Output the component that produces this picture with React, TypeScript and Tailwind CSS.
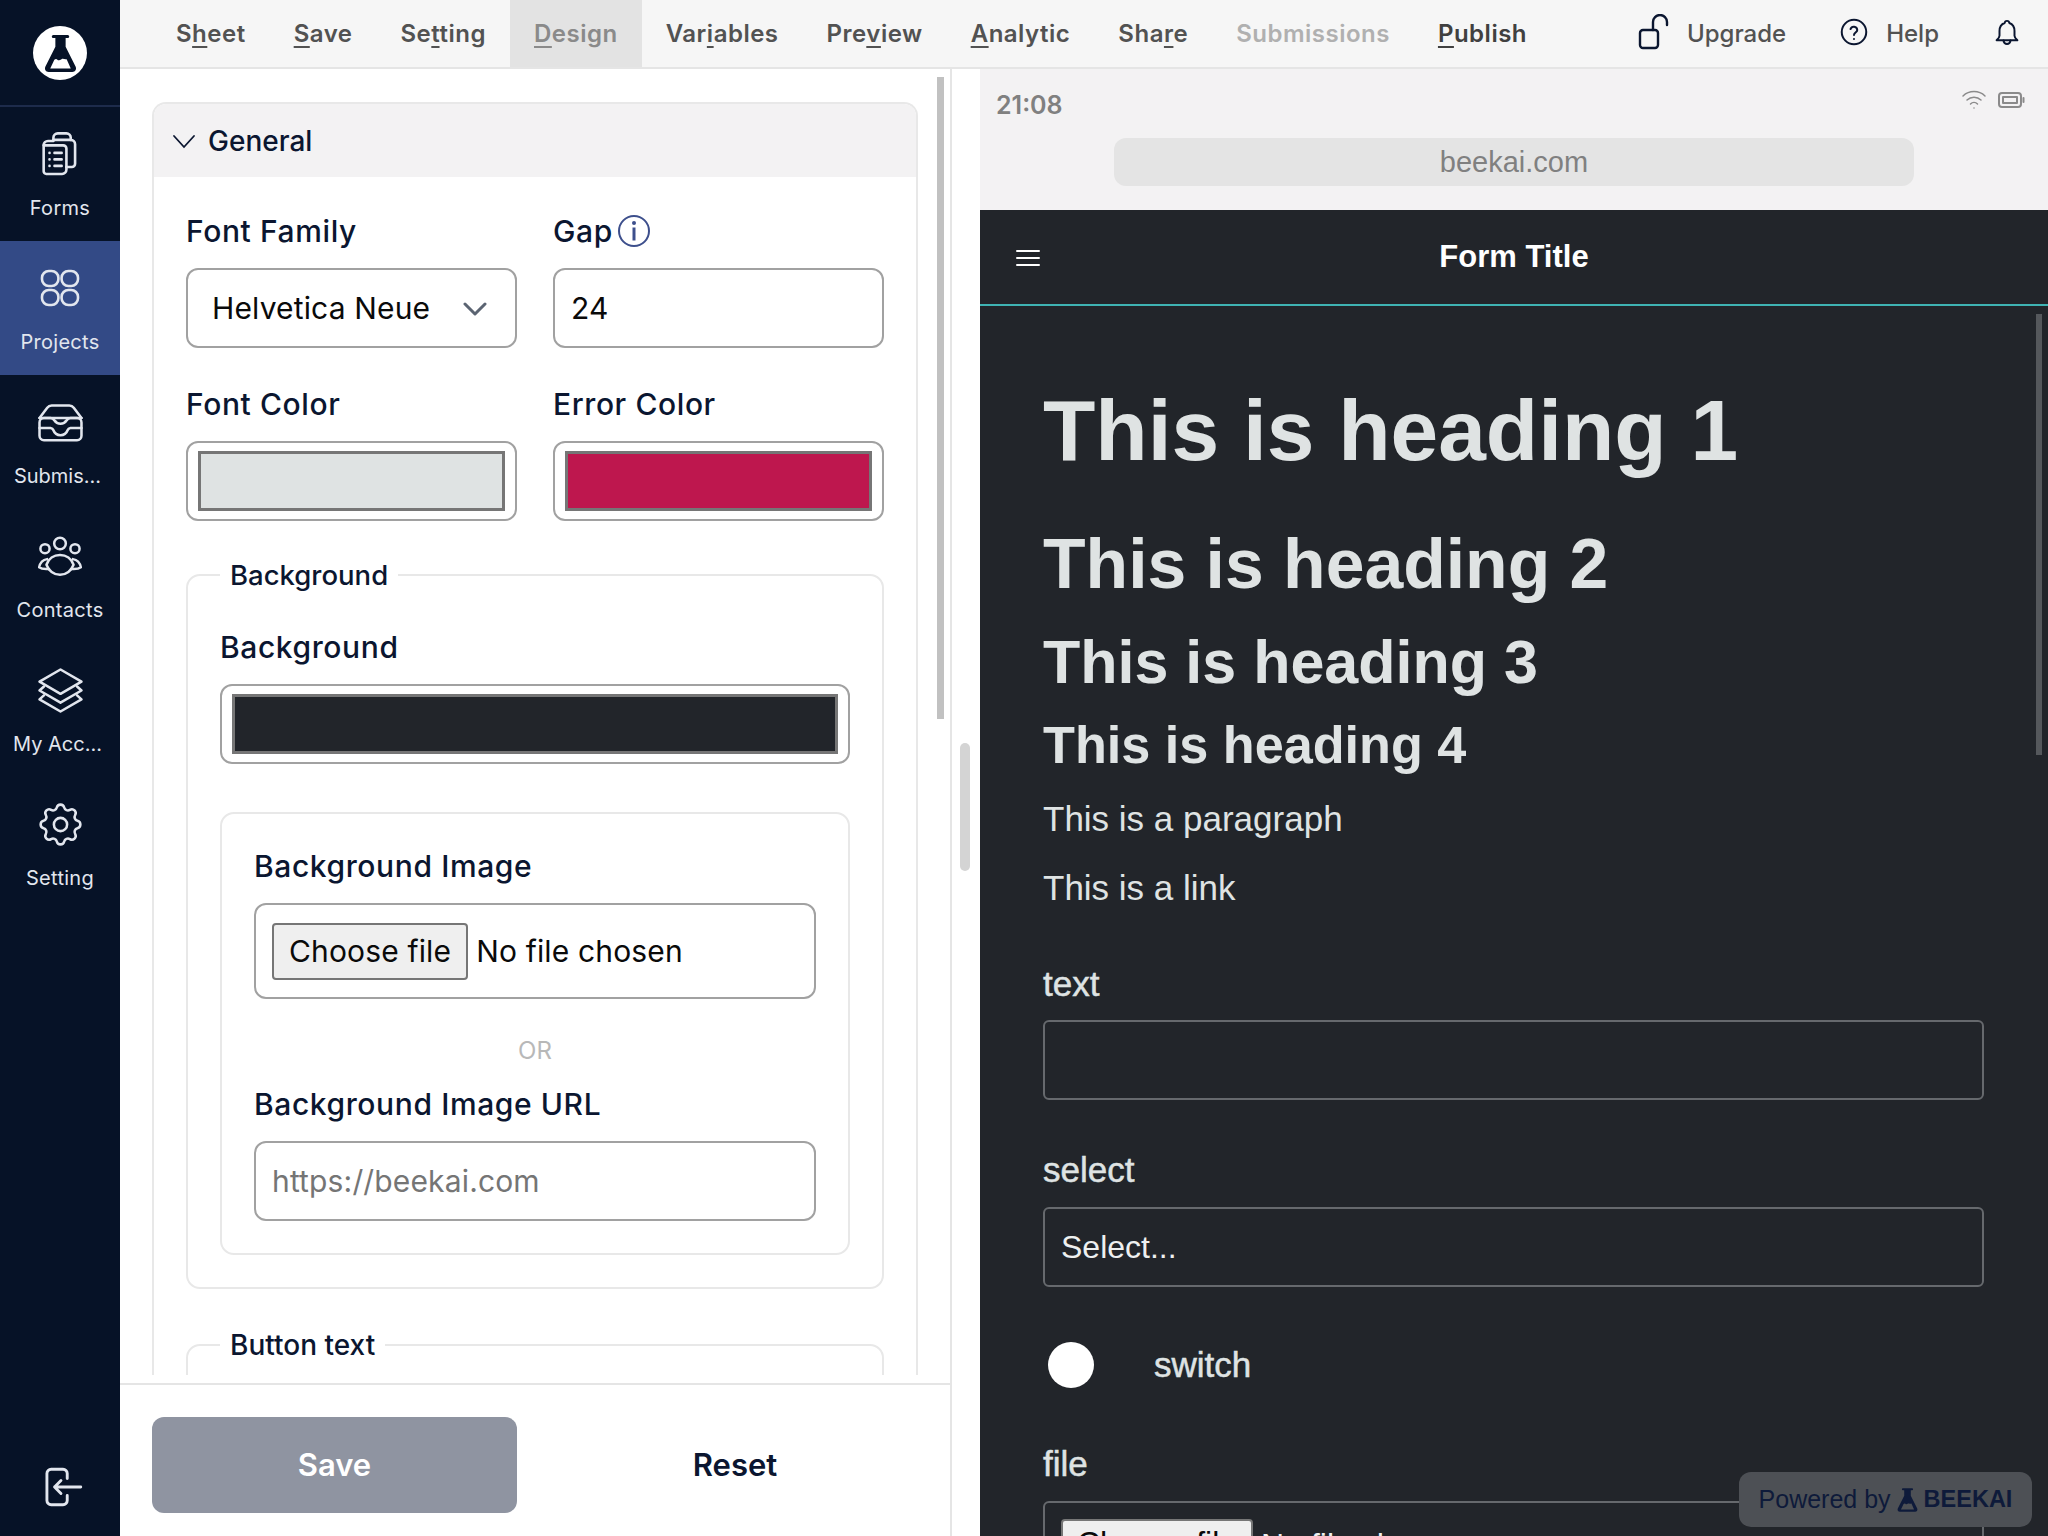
import React from "react";

const inter = "font-['Inter',sans-serif]";

const Ico = ({ w = 50, h, vb = "0 0 24 24", sw = 1.3, children }: { w?: number; h?: number; vb?: string; sw?: number; children: React.ReactNode }) => (
  <svg width={w} height={h ?? w} viewBox={vb} fill="none" stroke="currentColor" strokeWidth={sw} strokeLinecap="round" strokeLinejoin="round" className="shrink-0">
    {children}
  </svg>
);

const FormsIcon = () => (
  <span className="ml-[2px]">
    <Ico w={52} sw={1.200}>
      <path d="M8.500 6H6a2 2 0 0 0-2 2V20a1.200 1.200 0 0 0 1.200 1.200H12.500a2 2 0 0 0 2-2V18" />
      <path d="M14.500 18V9.500A1.500 1.500 0 0 0 13 8H4" />
      <path d="M8.500 5.500V4.500a2 2 0 0 1 2-2h4a2 2 0 0 1 2 2v1a2 2 0 0 1 2 2V16.500a1.500 1.500 0 0 1-1.500 1.500H14.500" />
      <path d="M8.500 5.500h8" />
      <path d="M6.700 11.500h.01M6.700 14.500h.01M6.700 17.500h.01M9 11.500H12.300M9 14.500H12.300M9 17.500H12.300" />
    </Ico>
  </span>
);
const ProjectsIcon = () => (
  <Ico w={48} sw={1.300}>
    <rect x="3" y="3.500" width="8.200" height="7.500" rx="3.400" />
    <rect x="12.800" y="3.500" width="8.200" height="7.500" rx="3.400" />
    <rect x="3" y="13" width="8.200" height="7.500" rx="3.400" />
    <rect x="12.800" y="13" width="8.200" height="7.500" rx="3.400" />
  </Ico>
);
const InboxIcon = () => (
  <Ico w={53} sw={1.150}>
    <path d="M2.500 10 6 5.300A2.500 2.500 0 0 1 8 4.300h8a2.500 2.500 0 0 1 2 1L21.500 10" />
    <rect x="2.500" y="10" width="19" height="10" rx="2" />
    <path d="M2.500 10H7.500a2 2 0 0 1 1.700 1a3.300 3.300 0 0 0 5.600 0a2 2 0 0 1 1.700-1h5" />
    <path d="M2.500 14.500H7.500a1.500 1.500 0 0 1 1.300 1a3.400 3.400 0 0 0 6.400 0a1.500 1.500 0 0 1 1.300-1h5" />
  </Ico>
);
const ContactsIcon = () => (
  <Ico w={50} sw={1.200}>
    <circle cx="12" cy="6" r="2.800" />
    <circle cx="4.800" cy="8.500" r="2.200" />
    <circle cx="19.200" cy="8.500" r="2.200" />
    <path d="M12 11.500c-3 0-5.500 1.800-6.500 4.700c1 2.800 3.500 4.800 6.500 4.800s5.500-2 6.500-4.800c-1-2.900-3.500-4.700-6.500-4.700z" />
    <path d="M5.800 13.500C3.800 13.800 2.500 15 2 17.400c1 .8 2.500 1 4.700 .8M18.200 13.500c2 .3 3.300 1.500 3.800 3.900c-1 .8-2.500 1-4.700 .8" />
  </Ico>
);
const StackIcon = () => (
  <Ico w={53} sw={1.150}>
    <path d="M12 2.500 2.500 8 12 13.500 21.500 8z" />
    <path d="M4.500 10.200 2.500 12 12 17.500 21.500 12l-2-1.800" />
    <path d="M4.500 14.200 2.500 16 12 21.500 21.500 16l-2-1.800" />
  </Ico>
);
const GearIcon = () => (
  <Ico w={53} sw={1.150}>
    <path d="M10.325 4.317c.426-1.756 2.924-1.756 3.350 0a1.724 1.724 0 0 0 2.573 1.066c1.543-.940 3.310.826 2.370 2.370a1.724 1.724 0 0 0 1.065 2.572c1.756.426 1.756 2.924 0 3.350a1.724 1.724 0 0 0-1.066 2.573c.940 1.543-.826 3.310-2.370 2.370a1.724 1.724 0 0 0-2.572 1.065c-.426 1.756-2.924 1.756-3.350 0a1.724 1.724 0 0 0-2.573-1.066c-1.543.940-3.310-.826-2.370-2.370a1.724 1.724 0 0 0-1.065-2.572c-1.756-.426-1.756-2.924 0-3.350a1.724 1.724 0 0 0 1.066-2.573c-.940-1.543.826-3.310 2.370-2.370c1 .608 2.296.070 2.572-1.065z" />
    <circle cx="12" cy="12" r="3" />
  </Ico>
);
const LogoutIcon = () => (
  <Ico w={44} vb="0 0 26 26" sw={1.700}>
    <path d="M15.500 8V5a2.500 2.500 0 0 0-2.500-2.500H6A2.500 2.500 0 0 0 3.500 5v16A2.500 2.500 0 0 0 6 23.500h7a2.500 2.500 0 0 0 2.500-2.500v-3" />
    <path d="M23.500 13H8M8 13l3.800-3.800M8 13l3.800 3.800" />
  </Ico>
);
const Flask = ({ className }: { className?: string }) => (
  <svg viewBox="0 0 32 38" className={className} fill="currentColor">
    <path
      fillRule="evenodd"
      d="M9 1h14a1.500 1.500 0 0 1 0 3h-2v8.500l9.800 19.500c1 2.500-.3 5-3.300 5H4.500c-3 0-4.300-2.500-3.300-5L11 12.500V4H9a1.500 1.500 0 0 1 0-3zM6 33.500h20L22 24.500c-2 .8-3-1-5 0s-3 1.500-4 .5s-2-.8-3 .2z"
    />
  </svg>
);

const side: { label: string; icon: React.ReactNode; active?: boolean; text?: string }[] = [
  { label: "Forms", icon: <FormsIcon />, text: "tracking-[0.3px]" },
  { label: "Projects", icon: <ProjectsIcon />, active: true, text: "tracking-[0.3px]" },
  { label: "Submis...", icon: <InboxIcon />, text: "tracking-[0px] -ml-[5px]" },
  { label: "Contacts", icon: <ContactsIcon />, text: "tracking-[0.3px]" },
  { label: "My Acc...", icon: <StackIcon />, text: "tracking-[0px] -ml-[5px]" },
  { label: "Setting", icon: <GearIcon />, text: "tracking-[0.3px] -mt-[1px]" },
];

const Sidebar = () => (
  <aside className="w-[120px] shrink-0 h-full bg-[#061227] flex flex-col text-[#e2e6ee]">
    <div className="h-[107px] shrink-0 flex items-center justify-center border-b-2 border-[#1d2b4b] pt-[1px]">
      <div className="w-[54px] h-[54px] rounded-full bg-white flex items-center justify-center text-[#061227]">
        <Flask className="w-[33px] h-[39px]" />
      </div>
    </div>
    {side.map((s) => (
      <div key={s.label} className={`h-[134px] shrink-0 flex flex-col items-center pt-[24px] ${s.active ? "bg-[#334a86]" : ""}`}>
        <div className="h-[46px] flex items-center justify-center">{s.icon}</div>
        <span className={`mt-[17px] text-[20px] leading-[28px] ${s.text ?? ""}`}>{s.label}</span>
      </div>
    ))}
    <div className="mt-auto h-[71px] pl-[41px]">
      <LogoutIcon />
    </div>
  </aside>
);

const NavItem = ({ pre = "", u = "", post = "", className = "" }: { pre?: string; u?: string; post?: string; className?: string }) => (
  <div className={`h-full px-[24px] flex items-center text-[24px] font-semibold tracking-[0.5px] ${className}`}>
    <span>
      {pre}
      <span className="underline underline-offset-[4px] decoration-2">{u}</span>
      {post}
    </span>
  </div>
);

const TopBar = () => (
  <header className="h-[69px] shrink-0 bg-[#f6f6f6] border-b-2 border-[#e5e5e5] flex items-stretch pl-[32px] text-[#525252]">
    <NavItem pre="S" u="h" post="eet" />
    <NavItem u="S" post="ave" />
    <NavItem pre="Se" u="t" post="ting" />
    <NavItem u="D" post="esign" className="bg-[#e3e3e3] text-[#8a8a8a]" />
    <NavItem pre="Var" u="i" post="ables" />
    <NavItem pre="Pre" u="v" post="iew" />
    <NavItem u="A" post="nalytic" />
    <NavItem pre="Sha" u="r" post="e" />
    <NavItem pre="Submissions" className="text-[#b0b0b0]" />
    <NavItem u="P" post="ublish" className="text-[#404040]" />
    <div className="ml-auto flex items-center text-[24px] font-medium pr-[27px]">
      <span className="text-[#0b1630] mr-[17px] -mt-[4px]">
        <Ico w={32} h={36} vb="0 0 32 36" sw={2.400}>
          <rect x="2" y="16" width="18" height="18" rx="3" />
          <path d="M15 16V8a7 7 0 0 1 14 0v3" />
        </Ico>
      </span>
      <span>Upgrade</span>
      <span className="text-[#0b1630] ml-[54px] mr-[18px] -mt-[4px]">
        <Ico w={28} sw={1.700}>
          <circle cx="12" cy="12" r="10.500" />
          <path d="M9 9.500a3 3 0 0 1 5.800 .8c0 2-2.800 2.400-2.800 4.200M12 18v.01" />
        </Ico>
      </span>
      <span>Help</span>
      <span className="text-[#0b1630] ml-[54px] -mt-[2px]">
        <Ico w={28} h={30} vb="0 0 24 26" sw={1.700}>
          <path d="M12 2.500a2 2 0 0 1 2 1.800c3 1 4.500 3.500 4.500 7v4c0 1.500 1.500 3 2.500 4H3c1-1 2.500-2.500 2.500-4v-4c0-3.500 1.500-6 4.500-7a2 2 0 0 1 2-1.800z" />
          <path d="M9 19.500a3 3 0 0 0 6 0" />
        </Ico>
      </span>
    </div>
  </header>
);

const Label = ({ children, className = "" }: { children: React.ReactNode; className?: string }) => (
  <label className={`block text-[30px] leading-[40px] font-medium tracking-[0.6px] text-[#0b1630] ${className}`}>{children}</label>
);

const Swatch = ({ color }: { color: string }) => (
  <div className="h-[80px] rounded-[12px] border-2 border-[#a1a1a1] px-[10px] py-[8px] bg-white">
    <div className="h-full border-[3px] border-[#767676]" style={{ backgroundColor: color }} />
  </div>
);

const BoxInput = ({ children, className = "" }: { children: React.ReactNode; className?: string }) => (
  <div className={`h-[80px] rounded-[12px] border-2 border-[#a1a1a1] bg-white flex items-center pt-[1px] text-[30px] tracking-[0.15px] ${className}`}>{children}</div>
);

const LeftPanel = () => (
  <section className="w-[832px] shrink-0 h-full flex flex-col border-r-2 border-[#e5e5e5] bg-white relative">
    <div className="h-[1306px] shrink-0 overflow-hidden px-[32px] pt-[33px]">
      <div className="w-[766px] rounded-t-[14px] border-x-2 border-t-2 border-[#e8e8e8]">
        <div className="h-[73px] bg-[#f3f2f3] rounded-t-[12px] flex items-center pl-[18px] text-[#0b1630]">
          <svg width="24" height="24" viewBox="0 0 24 24" fill="none" stroke="currentColor" strokeWidth="1.800" strokeLinecap="round">
            <path d="M2 7l10 11L22 7" />
          </svg>
          <span className="ml-[12px] text-[28px] font-medium leading-[40px]">General</span>
        </div>
        <div className="px-[32px] pt-[34px]">
          <div className="grid grid-cols-2 gap-x-[36px]">
            <div>
              <Label>Font Family</Label>
              <BoxInput className="mt-[17px] pl-[24px] pr-[28px] justify-between text-[#0a0a0a]">
                <span>Helvetica Neue</span>
                <svg width="24" height="16" viewBox="0 0 24 16" fill="none" stroke="#5b6472" strokeWidth="3" strokeLinecap="round" strokeLinejoin="round">
                  <path d="M2 3l10 10L22 3" />
                </svg>
              </BoxInput>
            </div>
            <div>
              <div className="flex items-center">
                <Label>Gap</Label>
                <svg className="ml-[4px]" width="34" height="34" viewBox="0 0 34 34" fill="none" stroke="#3d4f8c" strokeWidth="2">
                  <circle cx="17" cy="17" r="15" />
                  <path d="M17 13.500v13" strokeWidth="3" />
                  <circle cx="17" cy="9" r="2" fill="#3d4f8c" stroke="none" />
                </svg>
              </div>
              <BoxInput className="mt-[17px] pl-[16px] text-[#0a0a0a]">24</BoxInput>
            </div>
            <div className="mt-[36px]">
              <Label>Font Color</Label>
              <div className="mt-[17px]">
                <Swatch color="#dfe3e3" />
              </div>
            </div>
            <div className="mt-[36px]">
              <Label>Error Color</Label>
              <div className="mt-[17px]">
                <Swatch color="#be174e" />
              </div>
            </div>
          </div>

          <fieldset className="mt-[36px] border-2 border-[#e8e8e8] rounded-[14px] px-[32px] pb-[32px]">
            <legend className="px-[10px] text-[27.500px] leading-[36px] font-medium text-[#0b1630]">Background</legend>
            <Label className="mt-[34px]">Background</Label>
            <div className="mt-[17px]">
              <Swatch color="#22252a" />
            </div>
            <div className="mt-[48px] border-2 border-[#e8e8e8] rounded-[14px] px-[32px] pt-[32px] pb-[32px]">
              <Label>Background Image</Label>
              <div className="mt-[17px] h-[96px] rounded-[12px] border-2 border-[#a1a1a1] flex items-center pl-[16px] text-[30px] tracking-[0.15px] text-[#0a0a0a]">
                <span className="h-[57px] px-[15px] flex items-center bg-[#efefef] border-2 border-[#767676] rounded-[4px]">Choose file</span>
                <span className="ml-[8px]">No file chosen</span>
              </div>
              <div className="mt-[38px] text-center text-[24px] leading-[28px] text-[#b8b8b8]">OR</div>
              <Label className="mt-[19px]">Background Image URL</Label>
              <BoxInput className="mt-[17px] pl-[16px] text-[#757575]">https://beekai.com</BoxInput>
            </div>
          </fieldset>

          <fieldset className="mt-[38px] border-2 border-[#e8e8e8] rounded-[14px] px-[32px] pb-[32px] h-[200px]">
            <legend className="px-[10px] text-[28px] leading-[36px] font-medium text-[#0b1630]">Button text</legend>
          </fieldset>
        </div>
      </div>
    </div>
    <div className="flex-1 mt-[8px] border-t-2 border-[#e5e5e5] pl-[32px] pt-[32px] flex items-start">
      <button className="w-[365px] shrink-0 h-[96px] rounded-[12px] bg-[#8f94a1] text-white text-[31px] font-semibold">Save</button>
      <button className="ml-[28px] w-[380px] shrink-0 h-[96px] text-[#0b1630] text-[31px] font-semibold">Reset</button>
    </div>
    <div className="absolute left-[817px] top-[8px] w-[7px] h-[642px] bg-[#c1c1c1]" />
  </section>
);

const Splitter = () => (
  <div className="w-[28px] shrink-0 h-full bg-white relative">
    <div className="absolute left-[8px] top-[674px] w-[10px] h-[128px] rounded-full bg-[#d4d4d4]" />
  </div>
);

const FieldLabel = ({ children, className = "" }: { children: React.ReactNode; className?: string }) => (
  <div className={`text-[35px] leading-[40px] text-[#dfe3e3] [-webkit-text-stroke:0.5px_#dfe3e3] ${className}`}>{children}</div>
);

const Preview = () => (
  <section className="flex-1 min-w-0 h-full flex flex-col font-['Liberation_Sans',Arial,sans-serif] relative">
    <div className="h-[141px] shrink-0 bg-[#f3f2f3] relative">
      <div className={`absolute left-[16px] top-[19px] text-[25px] leading-[34px] font-semibold text-[#808080] ${inter}`}>21:08</div>
      <div className="absolute right-[23px] top-[20px] flex items-center gap-[10px] text-[#8a8a8a]">
        <Ico w={26} h={22} vb="0 0 26 22" sw={1.500}>
          <path d="M2 7a16 16 0 0 1 22 0M6 11a10 10 0 0 1 14 0M9.500 15a5 5 0 0 1 7 0M13 19v.01" />
        </Ico>
        <Ico w={28} h={20} vb="0 0 28 20" sw={2}>
          <rect x="2" y="3" width="22" height="14" rx="3" />
          <rect x="6" y="7" width="14" height="6" />
          <path d="M26.500 8v4" />
        </Ico>
      </div>
      <div className="absolute left-[134px] top-[69px] w-[800px] h-[48px] rounded-[12px] bg-[#e4e4e4] flex items-center justify-center pt-[2px] text-[29px] text-[#808080]">beekai.com</div>
    </div>
    <div className="flex-1 min-h-0 bg-[#22252a] overflow-hidden relative">
      <div className="h-[96px] border-b-2 border-[#3fb3b3] flex items-center justify-center pt-[1px] relative">
        <svg className="absolute left-[35px] top-[38px]" width="26" height="20" viewBox="0 0 26 20" stroke="#ffffff" strokeWidth="2" strokeLinecap="round">
          <path d="M2 3h22M2 10h22M2 17h22" />
        </svg>
        <span className="text-[31px] font-bold text-white">Form Title</span>
      </div>
      <div className="pl-[63px] pr-[64px] pt-[72px] w-[1068px] text-[#dfe3e3]">
        <h1 className="text-[85.700px] leading-[105px] font-bold">This is heading 1</h1>
        <h2 className="mt-[39px] text-[69.700px] leading-[84px] font-bold">This is heading 2</h2>
        <h3 className="mt-[19px] text-[61px] leading-[74px] font-bold">This is heading 3</h3>
        <h4 className="mt-[15px] text-[52.200px] leading-[63px] font-bold">This is heading 4</h4>
        <p className="mt-[18px] text-[35px] leading-[48px]">This is a paragraph</p>
        <p className="mt-[21px] text-[35px] leading-[48px]">This is a link</p>
        <FieldLabel className="mt-[52px]">text</FieldLabel>
        <div className="mt-[16px] h-[80px] rounded-[6px] border-2 border-[#66696d]" />
        <FieldLabel className="mt-[50px]">select</FieldLabel>
        <div className="mt-[17px] h-[80px] rounded-[6px] border-2 border-[#66696d] flex items-center pl-[16px] text-[32px] text-[#eef0f0]">Select...</div>
        <div className="mt-[55px] flex items-center h-[46px]">
          <div className="ml-[5px] w-[46px] h-[46px] rounded-full bg-white" />
          <span className="ml-[60px] text-[35px] text-[#dfe3e3] [-webkit-text-stroke:0.5px_#dfe3e3]">switch</span>
        </div>
        <FieldLabel className="mt-[56px]">file</FieldLabel>
        <div className="mt-[17px] h-[90px] rounded-[6px] border-2 border-[#66696d] pt-[16px] pl-[16px] flex text-[32px] text-[#eef0f0]">
          <span className="h-[48px] px-[14px] flex items-center bg-[#efefef] text-[#0a0a0a] border-2 border-[#767676] rounded-[4px]">Choose file</span>
          <span className="ml-[8px] mt-[2px]">No file chosen</span>
        </div>
      </div>
      <div className="absolute left-[1056px] top-[104px] w-[6px] h-[441px] bg-[#55585c]" />
      <div className="absolute left-[759px] top-[1262px] w-[293px] h-[55px] rounded-[12px] bg-[#4d5055] flex items-center justify-center text-[25px] text-[#0e1a3a]">
        <span>Powered by</span>
        <Flask className="w-[21px] h-[28px] mx-[6px]" />
        <span className="font-bold text-[23.500px]">BEEKAI</span>
      </div>
    </div>
  </section>
);

export default function App() {
  return (
    <div className={`w-[2048px] h-[1536px] overflow-hidden flex bg-white ${inter}`}>
      <Sidebar />
      <div className="flex-1 min-w-0 h-full flex flex-col">
        <TopBar />
        <div className="flex-1 min-h-0 flex">
          <LeftPanel />
          <Splitter />
          <Preview />
        </div>
      </div>
    </div>
  );
}
